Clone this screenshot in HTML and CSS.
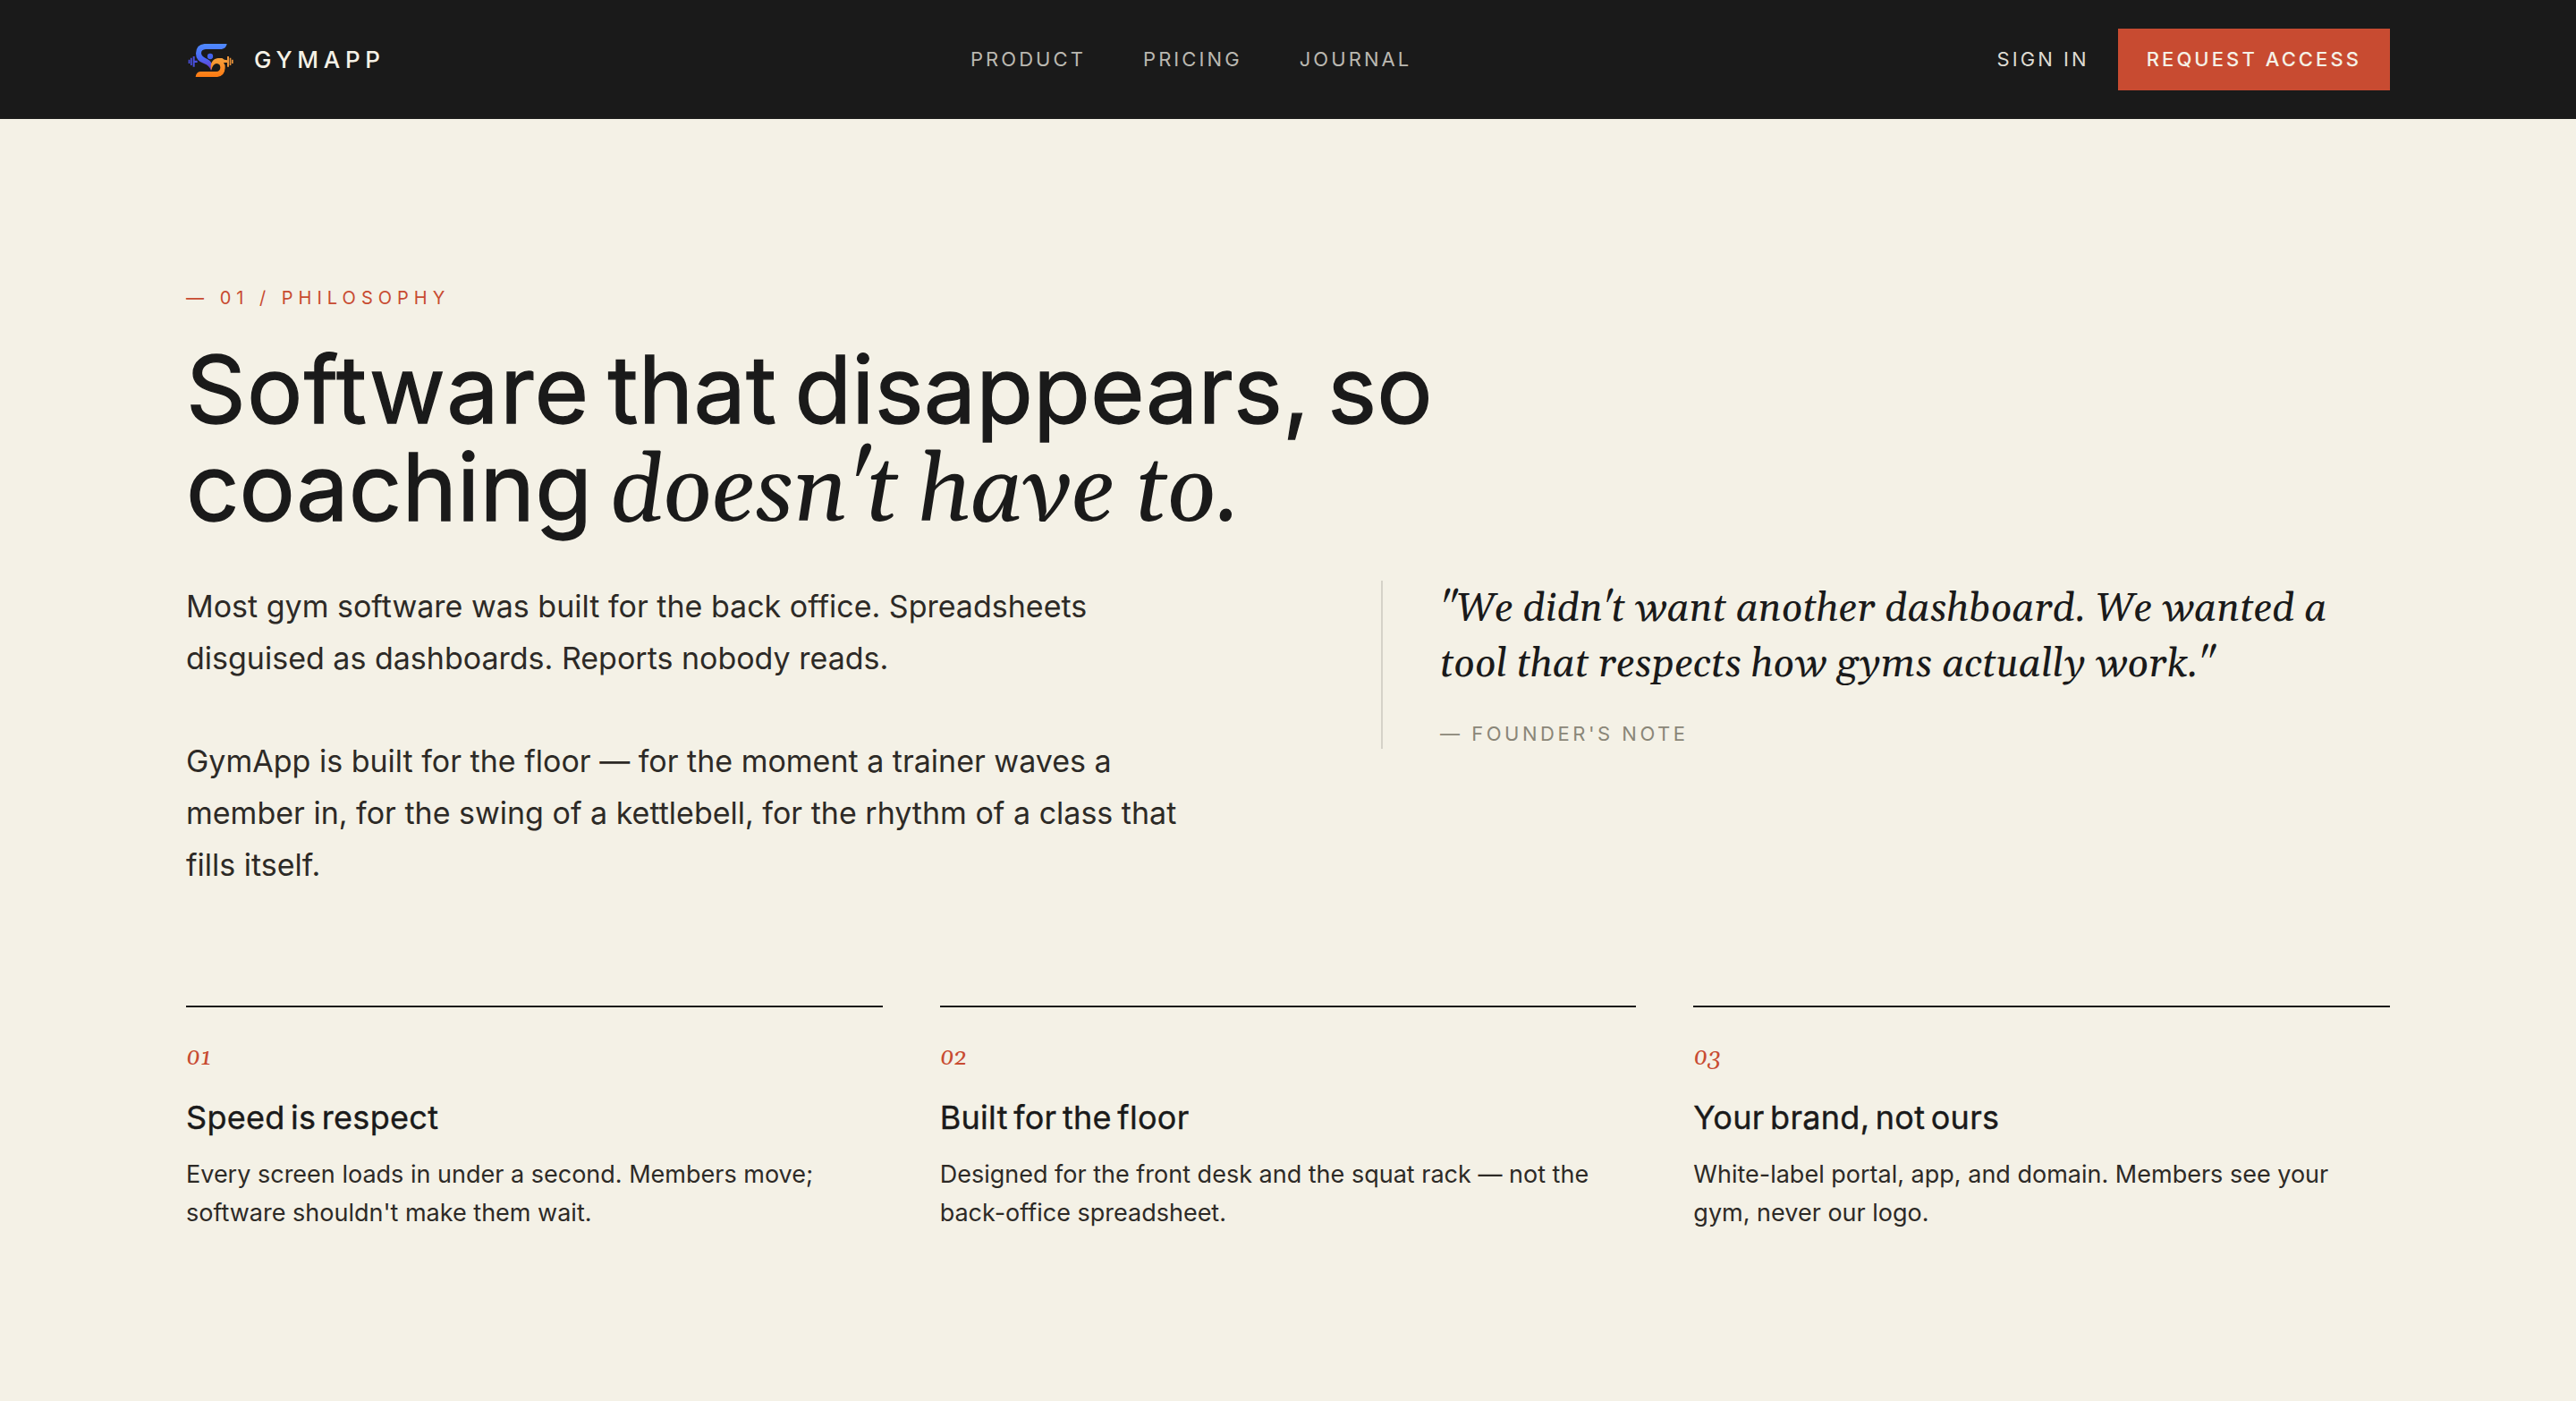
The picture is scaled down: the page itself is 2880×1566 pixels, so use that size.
FILE: index.html
```html
<!DOCTYPE html>
<html lang="en">
<head>
<meta charset="utf-8">
<title>GymApp</title>
<link rel="stylesheet" href="styles.css">
</head>
<body>
<header class="site-header">
  <a class="brand">
    <svg class="brand-mark" viewBox="12 0 168 156" width="56" height="52">
      <defs>
        <linearGradient id="blue" x1="0" y1="24" x2="0" y2="112" gradientUnits="userSpaceOnUse"><stop offset="0" stop-color="#4f8bff"/><stop offset=".55" stop-color="#4a68f5"/><stop offset="1" stop-color="#6a35c8"/></linearGradient>
        <linearGradient id="orange" x1="0" y1="72" x2="0" y2="135" gradientUnits="userSpaceOnUse"><stop offset="0" stop-color="#f5a03c"/><stop offset="1" stop-color="#fd7a12"/></linearGradient>
      </defs>
      <path fill="url(#blue)" d="M74 24H149Q146 40 131 42H78Q63 43 63 55Q63 65 76 71Q95 79 99 92Q101 103 96 113Q90 97 72 90Q45 81 45 56Q46 26 74 24Z"/>
      <circle cx="93" cy="66" r="9.5" fill="#4263ee"/>
      <path fill="#4a50e0" d="M20 77h5v13h-5zM27 71h5v25h-5zM35 66h6v35h-6zM41 80h9v7h-9z"/>
      <path fill="url(#orange)" d="M96 113Q93 94 99 85Q106 73 119 72H133Q139 79 151 79V87H138Q144 94 143 105Q141 133 117 135H44Q46 119 60 117H114Q126 116 127 104Q127 91 115 90Q102 91 96 113Z"/>
      <path fill="#e8923a" d="M150 66h6v35h-6zM158 71h5v25h-5zM165 77h5v13h-5z"/>
    </svg>
    <span class="brand-name">GYMAPP</span>
  </a>
  <nav class="nav"><a>PRODUCT</a><a>PRICING</a><a>JOURNAL</a></nav>
  <div class="actions"><a class="sign-in">SIGN IN</a><a class="button">REQUEST ACCESS</a></div>
</header>
<main class="page">
  <p class="eyebrow">— 01 / PHILOSOPHY</p>
  <h1 class="headline"><span class="lead">Software</span> that disappears, so<br>coaching <em>doesn't have to.</em></h1>
  <section class="intro">
    <div class="copy">
      <p>Most gym software was built for the back office. Spreadsheets disguised as dashboards. Reports nobody reads.</p>
      <p>GymApp is built for the floor — for the moment a trainer waves a member in, for the swing of a kettlebell, for the rhythm of a class that fills itself.</p>
    </div>
    <figure class="quote">
      <blockquote>"We didn't want another dashboard. We wanted a tool that respects how gyms actually work."</blockquote>
      <figcaption>— FOUNDER'S NOTE</figcaption>
    </figure>
  </section>
  <section class="cards">
    <article class="card">
      <p class="num">01</p>
      <h2>Speed is respect</h2>
      <p class="desc">Every screen loads in under a second. Members move; software shouldn't make them wait.</p>
    </article>
    <article class="card">
      <p class="num">02</p>
      <h2>Built for the floor</h2>
      <p class="desc">Designed for the front desk and the squat rack — not the back-office spreadsheet.</p>
    </article>
    <article class="card">
      <p class="num">03</p>
      <h2>Your brand, not ours</h2>
      <p class="desc">White-label portal, app, and domain. Members see your gym, never our logo.</p>
    </article>
  </section>
</main>
</body>
</html>
```
FILE: styles.css
```css
* { box-sizing: border-box; margin: 0; padding: 0; }
body { background: #f4f1e6; color: #1a1a1a; font-family: Inter, sans-serif; }
.site-header { height: 133px; padding: 0 208px; background: #1a1a1a; display: flex; justify-content: space-between; align-items: center; }
.brand { display: flex; align-items: center; gap: 20px; color: #f5f1e6; }
.brand-name { font-size: 26px; font-weight: 500; letter-spacing: 0.22em; }
.nav { display: flex; gap: 64px; padding-bottom: 1px; color: #bab8b1; font-size: 22px; letter-spacing: 0.14em; }
.actions { display: flex; align-items: center; gap: 32px; font-size: 22px; letter-spacing: 0.14em; color: #dedbd2; }
.sign-in { padding-bottom: 1px; }
.button { height: 69px; padding: 0 32px 1px; display: flex; align-items: center; background: #c84b31; color: #f5f1e6; font-weight: 500; }
.page { padding: 184px 208px 0; }
.eyebrow { font-size: 20px; line-height: 32px; letter-spacing: 0.3em; color: #c84b31; }
.headline { margin-top: 32px; font-size: 104px; line-height: 109.2px; font-weight: 400; letter-spacing: 0.2px; word-spacing: -9.4px; -webkit-text-stroke: 1.3px #1a1a1a; }
.headline .lead { letter-spacing: 1.3px; }
.headline em { font-family: Georgia, Gelasio, "Liberation Serif", serif; font-weight: 400; letter-spacing: -1.2px; word-spacing: 0; -webkit-text-stroke: 0; }
.intro { margin-top: 41.6px; display: grid; grid-template-columns: 1128px 1128px; gap: 208px; align-items: start; }
.copy { font-size: 34px; line-height: 57.8px; color: #2d2a26; }
.copy p + p { margin-top: 57.8px; }
.quote { border-left: 2px solid #d5d2c8; padding-left: 64px; }
.quote blockquote { padding-top: 2px; font: italic 44px/61.6px Georgia, Gelasio, "Liberation Serif", serif; }
.quote figcaption { margin-top: 30px; font-size: 22px; line-height: 33px; letter-spacing: 0.16em; color: #8a8678; }
.cards { margin-top: 128.3px; display: grid; grid-template-columns: repeat(3, 1fr); gap: 64px; }
.card { border-top: 2px solid #1a1a1a; padding-top: 36px; }
.num { font: italic 26px/42px Georgia, Gelasio, "Liberation Serif", serif; color: #c84b31; }
.card h2 { margin-top: 18px; font-size: 36px; line-height: 54px; font-weight: 400; letter-spacing: 0.3px; word-spacing: -4px; -webkit-text-stroke: 0.4px #1a1a1a; }
.desc { margin-top: 15px; font-size: 27px; line-height: 43.2px; color: #2d2a26; }
```
